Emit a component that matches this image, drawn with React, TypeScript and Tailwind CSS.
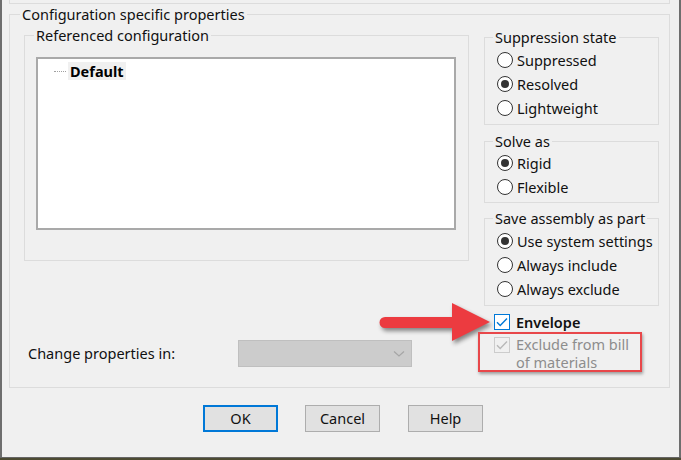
import type { ReactNode } from "react";

const FONT = { fontFamily: '"Noto Sans", "Open Sans", sans-serif' };

function Group({ title, className, children }: { title: string; className: string; children: ReactNode }) {
  return (
    <fieldset className={`border border-[#dcdcdc] ${className}`}>
      <legend className="ml-[8px] px-[2px] text-[14.5px] leading-[20px] text-[#111]">{title}</legend>
      {children}
    </fieldset>
  );
}

function Radio({ label, checked, h = "h-[24px]" }: { label: string; checked?: boolean; h?: string }) {
  return (
    <div className={`flex items-center gap-[4px] pl-[12px] ${h}`}>
      <span className="flex h-[16px] w-[16px] items-center justify-center rounded-full border border-[#333] bg-white">
        {checked && <span className="h-[8px] w-[8px] rounded-full bg-[#333]" />}
      </span>
      <span className="text-[14.5px] leading-[20px] text-[#111]">{label}</span>
    </div>
  );
}

function Check({ color }: { color: string }) {
  return (
    <svg width="12" height="10" viewBox="0 0 12 10" fill="none">
      <path d="M1 5.2 L4.2 8.4 L11 1.4" stroke={color} strokeWidth="1.4" />
    </svg>
  );
}

function Button({ label, primary, className }: { label: string; primary?: boolean; className?: string }) {
  return (
    <button
      className={`flex h-[27px] w-[75px] items-center justify-center bg-[#e1e1e1] text-[14.5px] text-[#111] ${
        primary ? "border-2 border-[#0078d7]" : "border border-[#adadad]"
      } ${className ?? ""}`}
    >
      {label}
    </button>
  );
}

export default function App() {
  return (
    <div className="relative flex h-[460px] w-[681px] flex-col overflow-hidden bg-[#4d4b33]" style={FONT}>
      <div className="h-[457px] border-x-2 border-[#6e6e6e] bg-[#f0f0f0]">
        {/* tail of the group above */}
        <div className="ml-[7px] h-[4px] w-[661px] border-x border-b border-[#dcdcdc]" />

        <fieldset className="ml-[7px] h-[384px] w-[661px] border border-[#dcdcdc]">
          <legend className="ml-[10px] px-[2px] text-[14.5px] leading-[20px] text-[#111]">
            Configuration specific properties
          </legend>
          <div className="flex">
            {/* left column */}
            <div className="flex flex-col">
              <fieldset className="ml-[14px] mt-[1px] h-[236px] w-[445px] border border-[#dcdcdc]">
                <legend className="ml-[9px] px-[2px] text-[14.5px] leading-[20px] text-[#111]">
                  Referenced configuration
                </legend>
                <div className="ml-[11px] mt-[12px] h-[173px] w-[420px] border-2 border-[#a9a9a9] bg-white">
                  <div className="mt-[3px] flex items-center pl-[16px]">
                    <span className="w-[12px] border-t border-dotted border-[#a0a0a0]" />
                    <span className="ml-[2px] bg-[#f0f0f0] px-[2px] text-[14.5px] font-bold leading-[18px] text-black">
                      Default
                    </span>
                  </div>
                </div>
              </fieldset>

              <div className="mt-[79px] flex h-[27px] items-center">
                <span className="ml-[18px] w-[210px] text-[14.5px] text-[#111]">Change properties in:</span>
                <div className="flex h-[27px] w-[174px] items-center justify-end border border-[#bfbfbf] bg-[#cccccc] pr-[6px]">
                  <svg width="12" height="8" viewBox="0 0 12 8" fill="none">
                    <path d="M1 1.5 L6 6 L11 1.5" stroke="#a6a6a6" strokeWidth="1.2" />
                  </svg>
                </div>
              </div>
            </div>

            {/* right column */}
            <div className="ml-[15px] flex w-[175px] flex-col">
              <Group title="Suppression state" className="mt-[3px] h-[98px]">
                <div className="mt-[1px]">
                  <Radio label="Suppressed" />
                  <Radio label="Resolved" checked />
                  <Radio label="Lightweight" h="h-[23px]" />
                </div>
              </Group>

              <Group title="Solve as" className="mt-[6px] h-[72px]">
                <Radio label="Rigid" checked />
                <Radio label="Flexible" />
              </Group>

              <Group title="Save assembly as part" className="mt-[5px] h-[98px]">
                <div className="mt-[1px]">
                  <Radio label="Use system settings" checked />
                  <Radio label="Always include" />
                  <Radio label="Always exclude" />
                </div>
              </Group>

              <div className="ml-[10px] mt-[6px] flex h-[20px] items-center gap-[6px]">
                <span className="flex h-[16px] w-[16px] items-center justify-center border border-[#0078d7] bg-white">
                  <Check color="#0078d7" />
                </span>
                <span className="text-[14.5px] font-semibold leading-[20px] text-[#111]">Envelope</span>
              </div>

              <div className="ml-[10px] mt-[3px] flex gap-[6px]">
                <span className="mt-[2px] flex h-[16px] w-[16px] items-center justify-center border border-[#cccccc] bg-[#f0f0f0]">
                  <Check color="#b8b8b8" />
                </span>
                <div className="flex flex-col text-[14.5px] leading-[18px] text-[#8d8d8d]">
                  <span>Exclude from bill</span>
                  <span>of materials</span>
                </div>
              </div>
            </div>
          </div>
        </fieldset>

        <div className="mt-[17px] flex">
          <Button label="OK" primary className="ml-[201px]" />
          <Button label="Cancel" className="ml-[27px]" />
          <Button label="Help" className="ml-[28px]" />
        </div>
      </div>
      <div className="h-[1px] bg-[#666]" />

      {/* annotation overlays */}
      <svg
        className="absolute left-[370px] top-[295px] drop-shadow-[2px_3px_2px_rgba(0,0,0,0.45)]"
        width="130"
        height="55"
        viewBox="0 0 130 55"
      >
        <path
          d="M15 22 L82 22 L82 8 L120 27 L82 46 L82 33 L15 33 A5.5 5.5 0 0 1 15 22 Z"
          fill="#ec3b40"
        />
      </svg>
      <div className="absolute left-[478px] top-[332px] h-[40px] w-[164px] border-2 border-[#e8474a] shadow-[1px_2px_3px_rgba(0,0,0,0.35)]" />
    </div>
  );
}
